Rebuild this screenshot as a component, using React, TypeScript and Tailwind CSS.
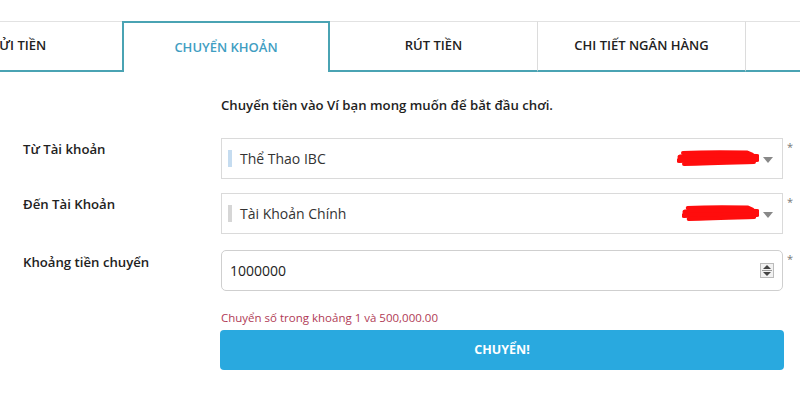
import React from "react";

function Scribble({ w = 82 }: { w?: number }) {
  return (
    <svg width={w} height="18" viewBox="0 0 82 18" className="shrink-0" preserveAspectRatio="none">
      <path d="M6 3 C 25 2, 50 2, 70 2.5 L 75 4.5" stroke="#ff0d0d" strokeWidth="4" fill="none" strokeLinecap="round" />
      <path d="M3 7 C 25 5.5, 55 5.5, 80 6.5" stroke="#ff0d0d" strokeWidth="5" fill="none" strokeLinecap="round" />
      <path d="M2 10.5 C 25 9.5, 55 9.5, 80 9.5" stroke="#ff0d0d" strokeWidth="5" fill="none" strokeLinecap="round" />
      <path d="M7 14 C 30 13, 55 12.5, 77 12" stroke="#ff0d0d" strokeWidth="4" fill="none" strokeLinecap="round" />
    </svg>
  );
}

function Arrow() {
  return (
    <svg width="10" height="6" viewBox="0 0 10 6" className="shrink-0">
      <path d="M0 0 L10 0 L5 6 Z" fill="#888" />
    </svg>
  );
}

function SelectBox({ bar, text, scribbleW }: { bar: string; text: string; scribbleW: number }) {
  return (
    <div className="flex items-start">
      <div className="w-[562px] h-[41px] border border-[#dadada] bg-white flex items-center pl-[6px] pr-[9px]">
        <div className={`w-[4px] h-[17px] ${bar}`} />
        <span className="ml-[8px] text-[14px] text-[#333] flex-1">{text}</span>
        <Scribble w={scribbleW} />
        <div className="ml-[4px] mt-[2px]">
          <Arrow />
        </div>
      </div>
      <span className="ml-[4px] mt-[1px] text-[11px] text-[#777]">*</span>
    </div>
  );
}

export default function App() {
  const tabBase =
    "w-[208px] shrink-0 h-[51px] flex items-center justify-center text-[13px] font-semibold uppercase";
  return (
    <div className="w-[800px] h-[408px] bg-white overflow-hidden font-['Open_Sans',sans-serif] text-[#222]">
      <div className="pt-[21px]">
        <div className="flex -ml-[86px]">
          <div className={`${tabBase} border-t border-t-[#e2e2e2] border-b-2 border-b-[#4aa3b3]`}>GỬI TIỀN</div>
          <div className={`${tabBase} border-2 border-b-0 border-[#4aa3b3] text-[#3f9ec2]`}>
            CHUYỂN KHOẢN
          </div>
          <div className={`${tabBase} border-t border-t-[#e2e2e2] border-r border-r-[#dcdcdc] border-b-2 border-b-[#4aa3b3]`}>
            RÚT TIỀN
          </div>
          <div className={`${tabBase} border-t border-t-[#e2e2e2] border-r border-r-[#dcdcdc] border-b-2 border-b-[#4aa3b3]`}>
            CHI TIẾT NGÂN HÀNG
          </div>
          <div className={`${tabBase} border-t border-t-[#e2e2e2] border-b-2 border-b-[#4aa3b3]`}></div>
        </div>
      </div>

      <div className="pl-[221px] mt-[23px] text-[13.2px] leading-[20px] font-semibold text-[#1e1e1e]">
        Chuyển tiền vào Ví bạn mong muốn để bắt đầu chơi.
      </div>

      <div className="mt-[23px] flex flex-col gap-[14px]">
        <div className="flex">
          <div className="w-[221px] pl-[23px] pt-[1px] text-[13.2px] leading-[20px] font-semibold">Từ Tài khoản</div>
          <SelectBox bar="bg-[#c5dcf0]" text="Thể Thao IBC" scribbleW={82} />
        </div>
        <div className="flex">
          <div className="w-[221px] pl-[23px] pt-[1px] text-[13.2px] leading-[20px] font-semibold">Đến Tài Khoản</div>
          <SelectBox bar="bg-[#d6d6d6]" text="Tài Khoản Chính" scribbleW={77} />
        </div>
        <div className="flex mt-[2px]">
          <div className="w-[221px] pl-[23px] pt-[2px] text-[13.2px] leading-[20px] font-semibold">Khoảng tiền chuyển</div>
          <div className="flex items-start">
            <div className="w-[562px] h-[41px] border border-[#cfcfcf] rounded-[5px] bg-white flex items-center pl-[8px] pr-[8px]">
              <span className="flex-1 text-[14px] text-[#222]">1000000</span>
              <div className="w-[14px] h-[15px] border border-[#bbb] bg-[#f2f2f2] flex flex-col items-center justify-center gap-[1px]">
                <svg width="8" height="4" viewBox="0 0 8 4">
                  <path d="M0 4 L4 0 L8 4 Z" fill="#444" />
                </svg>
                <div className="w-[10px] h-px bg-[#999]" />
                <svg width="8" height="4" viewBox="0 0 8 4">
                  <path d="M0 0 L8 0 L4 4 Z" fill="#444" />
                </svg>
              </div>
            </div>
            <span className="ml-[4px] mt-[1px] text-[11px] text-[#777]">*</span>
          </div>
        </div>
      </div>

      <div className="pl-[221px] mt-[19px] text-[11.5px] leading-[16px] text-[#b03a55]">
        Chuyển số trong khoảng 1 và 500,000.00
      </div>
      <div className="pl-[220px] mt-[4px]">
        <button className="w-[564px] h-[40px] rounded-[4px] bg-[#29a9df] text-white text-[12.5px] font-bold flex items-center justify-center">
          CHUYỂN!
        </button>
      </div>
    </div>
  );
}
